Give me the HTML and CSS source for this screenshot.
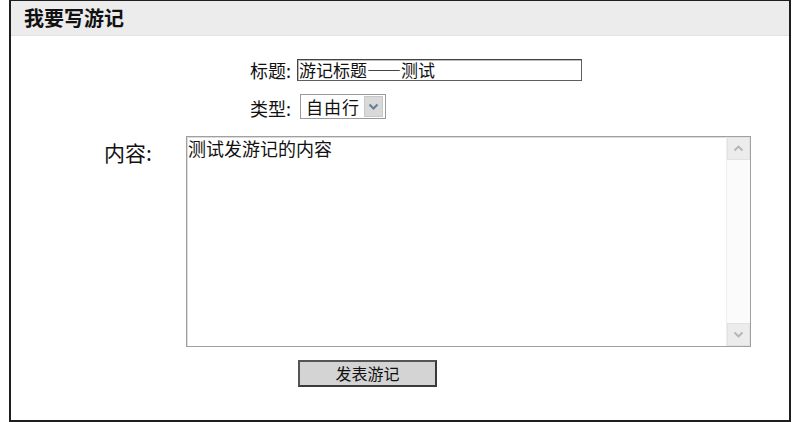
FILE: index.html
```html
<!DOCTYPE html>
<html lang="zh-CN">
<head>
<meta charset="utf-8">
<title>我要写游记</title>
<link rel="stylesheet" href="styles.css">
</head>
<body>
<div class="box">
  <div class="head">我要写游记</div>
  <div class="form">
    <div class="row row-title">
      <span class="label">标题:</span>
      <span class="input">游记标题——测试</span>
    </div>
    <div class="row row-type">
      <span class="label">类型:</span>
      <span class="select">
        <span class="select-text">自由行</span>
        <span class="select-btn">
          <svg width="11" height="8" viewBox="0 0 11 8"><path d="M1.5 1.5 L5.5 5.5 L9.5 1.5" fill="none" stroke="#6b7f9a" stroke-width="2.2"/></svg>
        </span>
      </span>
    </div>
    <div class="row row-content">
      <span class="label-big">内容:</span>
      <div class="area">
        <div class="area-text">测试发游记的内容</div>
        <div class="scroll">
          <span class="sbtn">
            <svg width="11" height="7" viewBox="0 0 11 7"><path d="M1.5 5.5 L5.5 1.5 L9.5 5.5" fill="none" stroke="#b4b4b4" stroke-width="1.8"/></svg>
          </span>
          <span class="strack"></span>
          <span class="sbtn">
            <svg width="11" height="7" viewBox="0 0 11 7"><path d="M1.5 1.5 L5.5 5.5 L9.5 1.5" fill="none" stroke="#b4b4b4" stroke-width="1.8"/></svg>
          </span>
        </div>
      </div>
    </div>
    <div class="row row-btn">
      <span class="button">发表游记</span>
    </div>
  </div>
</div>
</body>
</html>
```

FILE: styles.css
```css
html, body {
  margin: 0;
  padding: 0;
  background: #fff;
}
body {
  font-family: "Noto Sans CJK SC", "DejaVu Sans", sans-serif;
  color: #111;
}
.box {
  margin-left: 9px;
  width: 782px;
  height: 422px;
  box-sizing: border-box;
  border: 2px solid #1e1e1e;
  border-top-width: 1px;
  display: flex;
  flex-direction: column;
}
.head {
  height: 34px;
  line-height: 34px;
  background: #ececec;
  border-bottom: 1px dotted #dcdcdc;
  padding-left: 13px;
  font-size: 20px;
  font-weight: 700;
  color: #111;
}
.form {
  display: flex;
  flex-direction: column;
}
.row {
  display: flex;
}
.row-title {
  margin-top: 23px;
  padding-left: 239px;
  align-items: flex-end;
}
.label {
  font-size: 18px;
  line-height: 21px;
  width: 47px;
  white-space: nowrap;
}
.input {
  width: 285px;
  height: 22px;
  box-sizing: border-box;
  border: 1px solid #5e5e5e;
  border-top-color: #444;
  border-left-color: #444;
  box-shadow: inset 1px 1px 0 #bbb;
  font-size: 17px;
  line-height: 20px;
  padding-left: 1px;
  white-space: nowrap;
}
.row-type {
  margin-top: 13px;
  padding-left: 239px;
  align-items: flex-end;
}
.row-type .label {
  width: 50px;
}
.select {
  width: 86px;
  height: 25px;
  box-sizing: border-box;
  border: 1px solid #9a9a9a;
  display: flex;
  align-items: center;
  justify-content: space-between;
  padding: 2px;
}
.select-text {
  font-size: 17px;
  line-height: 20px;
  padding-left: 3px;
  letter-spacing: 1px;
}
.select-btn {
  width: 17px;
  height: 19px;
  background: #d9d9d9;
  border: 1px solid #c8c8c8;
  display: flex;
  align-items: center;
  justify-content: center;
}
.row-content {
  margin-top: 17px;
  padding-left: 93px;
}
.label-big {
  width: 82px;
  font-size: 21px;
  line-height: 24px;
  margin-top: 4px;
  white-space: nowrap;
}
.area {
  width: 565px;
  height: 211px;
  box-sizing: border-box;
  border: 1px solid #a0a0a0;
  box-shadow: inset 1px 1px 0 #dcdcdc;
  display: flex;
  justify-content: space-between;
}
.area-text {
  font-size: 18px;
  line-height: 22px;
  padding: 0 0 0 1px;
}
.scroll {
  width: 23px;
  background: #fbfbfb;
  border-left: 1px solid #efefef;
  display: flex;
  flex-direction: column;
}
.sbtn {
  height: 23px;
  background: #ececec;
  border: 1px solid #e2e2e2;
  box-sizing: border-box;
  display: flex;
  align-items: center;
  justify-content: center;
}
.strack {
  flex: 1;
}
.row-btn {
  margin-top: 13px;
  padding-left: 287px;
}
.button {
  width: 139px;
  height: 27px;
  box-sizing: border-box;
  background: #d4d4d4;
  border: 2px solid #3a3a3a;
  border-top-color: #555;
  border-left-color: #555;
  font-size: 16px;
  line-height: 23px;
  text-align: center;
  color: #111;
}
```
